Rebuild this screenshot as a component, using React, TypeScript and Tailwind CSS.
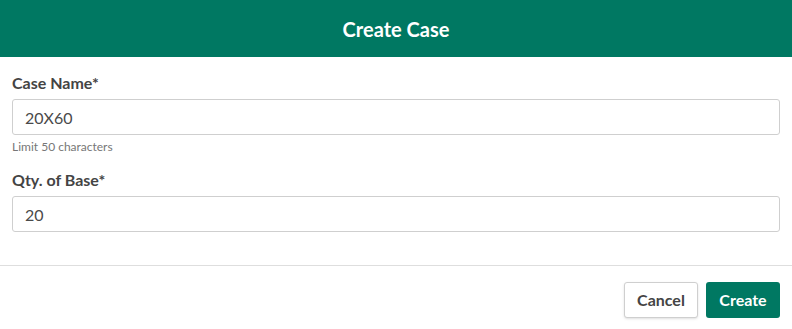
import React from 'react';

const Field: React.FC<{ label: string; value: string; hint?: string }> = ({ label, value, hint }) => (
  <div className="flex flex-col">
    <label className="text-[16px] font-bold text-[#444] leading-[20px]">{label}</label>
    <input
      readOnly
      value={value}
      className="mt-[6px] h-[36px] w-full rounded-[3px] border border-[#cfcfcf] px-[12px] text-[16px] text-[#4a4a4a] outline-none"
    />
    {hint && <span className="mt-[5px] text-[12px] leading-[14px] text-[#777]">{hint}</span>}
  </div>
);

export default function App() {
  return (
    <div className="w-[792px] h-[329px] bg-white font-['Lato','Liberation_Sans',sans-serif]">
      <div className="h-[57px] bg-[#007862] flex items-center justify-center">
        <h2 className="text-[20px] font-bold text-white">Create Case</h2>
      </div>
      <div className="px-[12px] pt-[16px] pb-[33px] flex flex-col gap-[16px]">
        <Field label="Case Name*" value="20X60" hint="Limit 50 characters" />
        <Field label="Qty. of Base*" value="20" />
      </div>
      <div className="border-t border-[#dedede] flex justify-end gap-[8px] px-[12px] pt-[16px]">
        <button className="h-[36px] w-[74px] rounded-[3px] border border-[#cfcfcf] bg-white text-[16px] font-bold text-[#444] shadow-sm">
          Cancel
        </button>
        <button className="h-[36px] w-[74px] rounded-[3px] bg-[#007862] text-[16px] font-bold text-white">
          Create
        </button>
      </div>
    </div>
  );
}
